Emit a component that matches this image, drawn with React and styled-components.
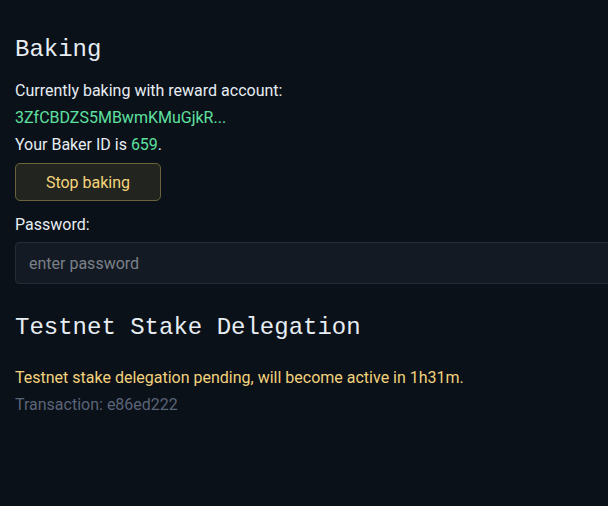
import React from "react"
import styled, { createGlobalStyle } from "styled-components"

const GlobalStyle = createGlobalStyle`
  html, body {
    margin: 0;
    background: #0b1119;
    overflow: hidden;
  }
  body {
    font-family: Roboto, "Noto Sans", sans-serif;
    color: #e6edf3;
  }
`

const Page = styled.div`
  padding: 30px 15px 0;
  width: 640px;
`

const Heading = styled.h2`
  font-family: "Liberation Mono", "DejaVu Sans Mono", monospace;
  font-weight: 400;
  font-size: 24px;
  line-height: 40px;
  margin: 0 0 ${(p) => p.gap || 4}px;
  color: #e6edf3;
`

const Line = styled.p`
  margin: 0;
  font-size: 16px;
  line-height: 27px;
  color: ${(p) => p.color || "#e6edf3"};
`

const Accent = styled.span`
  color: #5ee0a0;
`

const Button = styled.button`
  margin-top: 5px;
  width: 146px;
  height: 38px;
  background: #22251f;
  border: 1px solid #6e6239;
  border-radius: 5px;
  color: #f5d47c;
  font-family: inherit;
  font-size: 16px;
`

const Label = styled.label`
  display: block;
  margin-top: 12px;
  font-size: 16px;
  line-height: 24px;
`

const Input = styled.input`
  display: block;
  box-sizing: border-box;
  margin-top: 5px;
  width: 640px;
  height: 42px;
  padding: 0 13px;
  background: #131a23;
  border: 1px solid #262c35;
  border-radius: 4px;
  color: #e6edf3;
  font-family: inherit;
  font-size: 16px;
  outline: none;
  &::placeholder {
    color: #7b8189;
  }
`

const Section = styled.section`
  margin-top: 24px;
`

export default function App() {
  return (
    <>
      <GlobalStyle />
      <Page>
        <Heading gap={7}>Baking</Heading>
        <Line>Currently baking with reward account:</Line>
        <Line>
          <Accent>3ZfCBDZS5MBwmKMuGjkR...</Accent>
        </Line>
        <Line>
          Your Baker ID is <Accent>659</Accent>.
        </Line>
        <Button>Stop baking</Button>
        <Label>Password:</Label>
        <Input type="password" placeholder="enter password" />
        <Section>
          <Heading gap={16}>Testnet Stake Delegation</Heading>
          <Line color="#f2d27c">
            Testnet stake delegation pending, will become active in 1h31m.
          </Line>
          <Line color="#5a6477">Transaction: e86ed222</Line>
        </Section>
      </Page>
    </>
  )
}
